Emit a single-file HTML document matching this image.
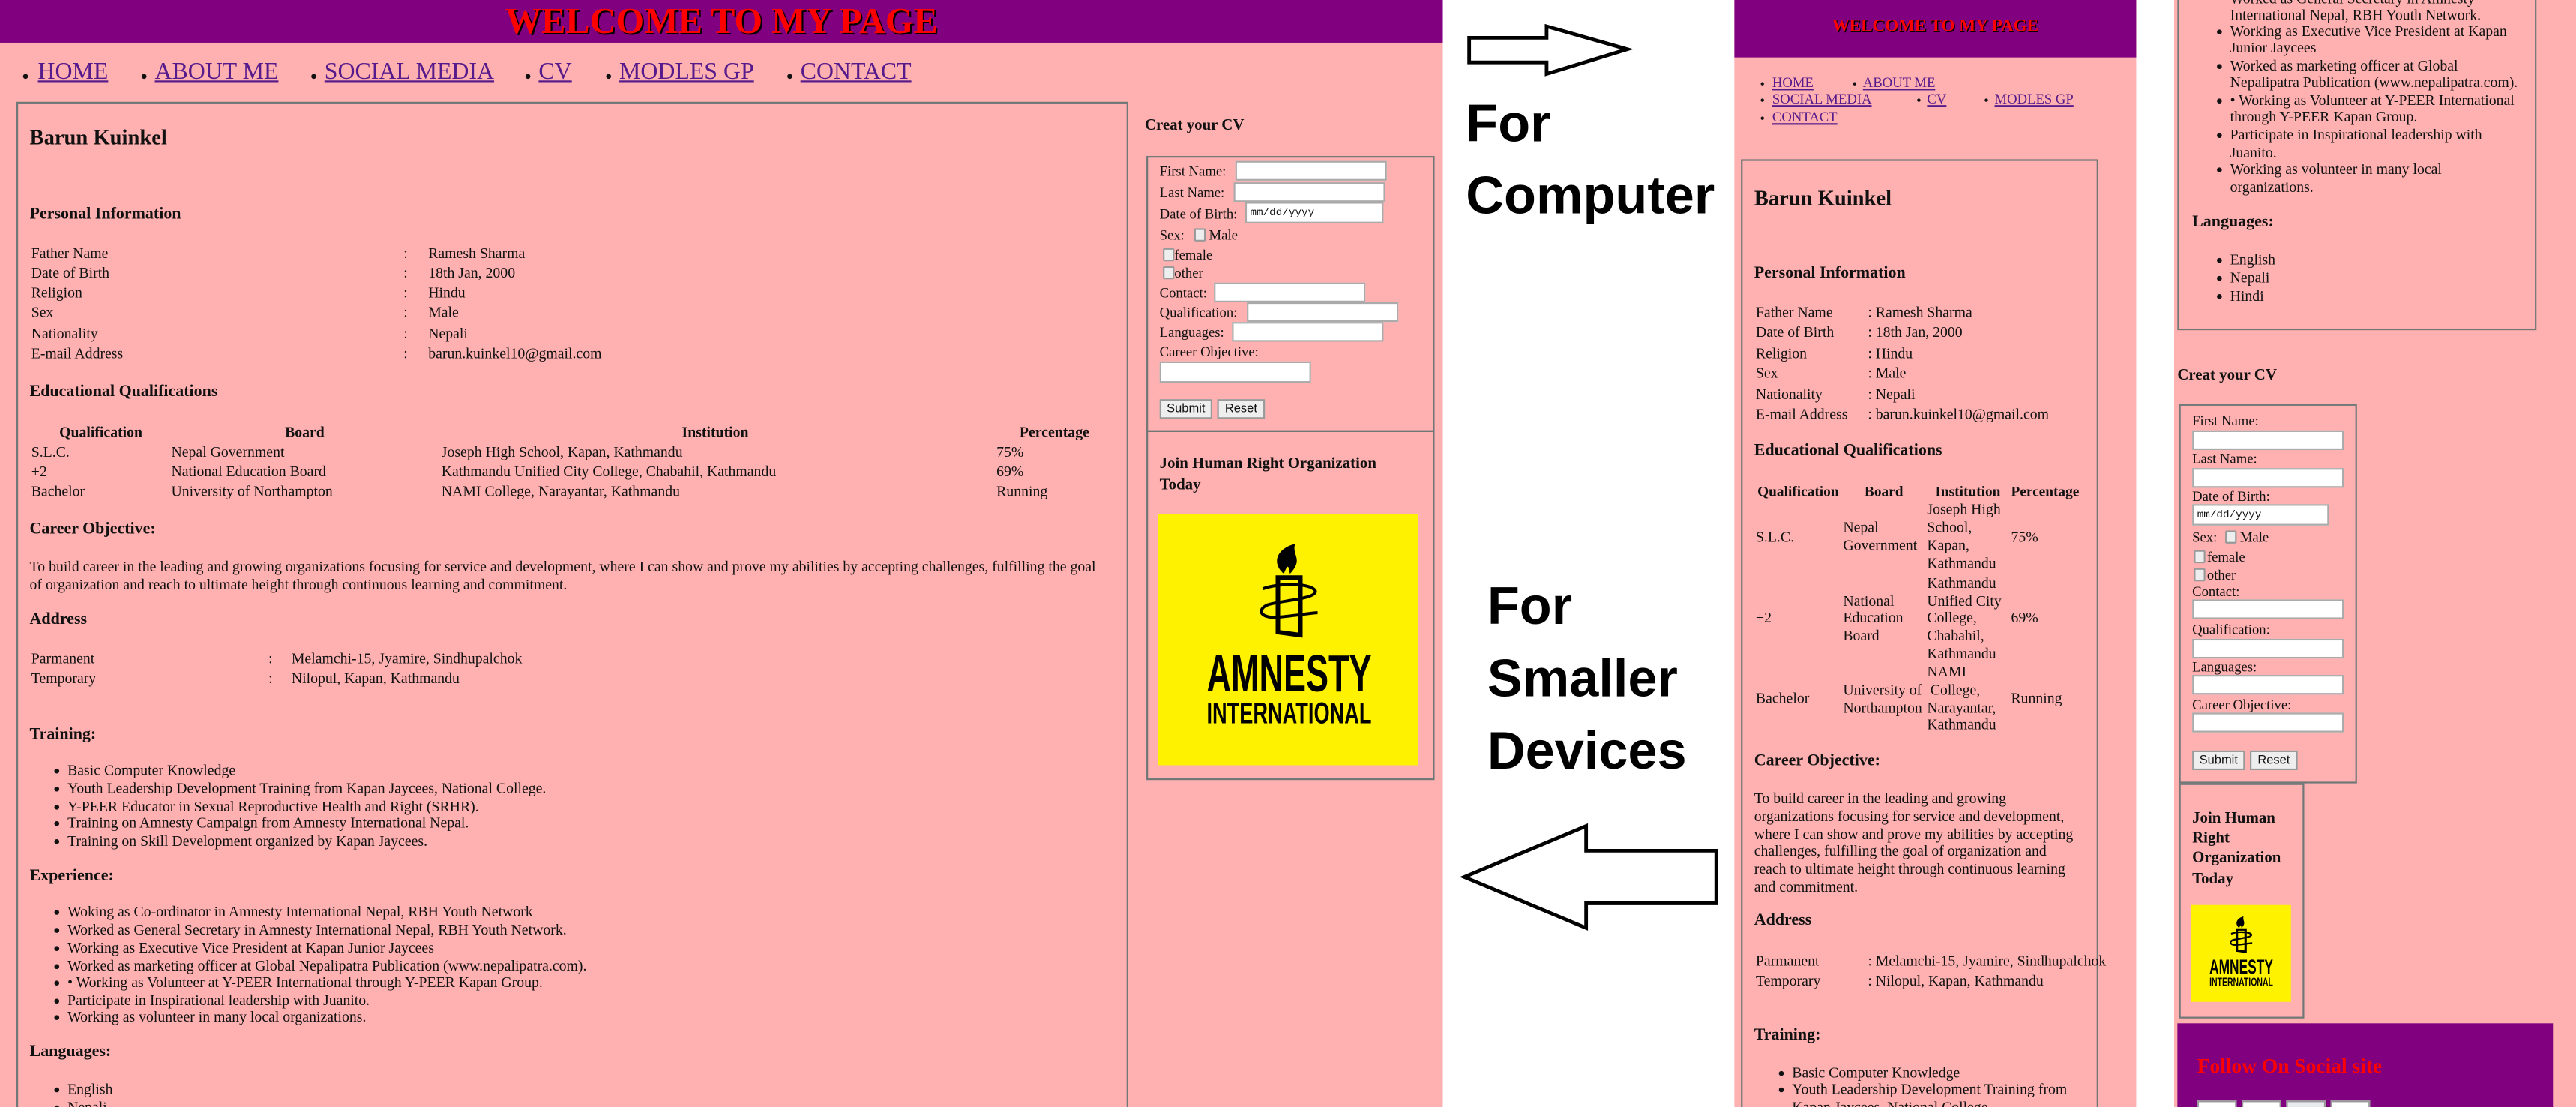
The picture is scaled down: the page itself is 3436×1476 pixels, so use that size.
<!DOCTYPE html>
<html><head><meta charset="utf-8">
<style>
html,body{margin:0;padding:0;background:#fff;width:3436px;height:1476px;overflow:hidden}
#s{position:absolute;left:0;top:0;width:1564px;height:674px;transform:scale(2.19693,2.18991);transform-origin:0 0;font-family:"Liberation Serif",serif;color:#111;font-size:9px;overflow:hidden}
.t{position:absolute;line-height:12px;white-space:nowrap}
.b{font-weight:bold;font-size:10px}
.pk{position:absolute;background:#FFB0B0}
.pu{position:absolute;background:#800080}
.bx{position:absolute;border:1px solid #6f7777;box-sizing:border-box}
.in{position:absolute;background:#fff;border:1px solid #aaa;box-sizing:border-box;height:12px}
.cb{position:absolute;width:5px;height:6px;border:0.6px solid #999;background:#eee;border-radius:1px}
.btn{position:absolute;height:12px;background:#eee;border:1px solid #999;box-sizing:border-box;font-family:"Liberation Sans",sans-serif;font-size:7.5px;line-height:10px;text-align:center}
a{color:#551A8B;text-decoration:underline}
.nav{font-size:14.5px;line-height:16px}
.dot{position:absolute;width:3px;height:3px;border-radius:50%;background:#111}
.bul::before{content:"";position:absolute;left:-8px;top:5px;width:3px;height:3px;border-radius:50%;background:#111}
.big{position:absolute;font-family:"Liberation Sans",sans-serif;font-weight:bold;font-size:32px;line-height:36px;color:#000;white-space:nowrap}
</style></head><body><div id="s">

<!-- Panel 1 -->
<div class="pk" style="left:0;top:0;width:876px;height:674px"></div>
<div class="pu" style="left:0;top:0;width:876px;height:26px"></div>
<div class="t" style="left:0;width:876px;top:1px;text-align:center;font-size:22px;line-height:24px;font-weight:bold;color:#f00;text-shadow:1px 1px 0 #000">WELCOME TO MY PAGE</div>
<div class="dot" style="left:14px;top:45px"></div><div class="t nav" style="left:23px;top:36px"><a>HOME</a></div>
<div class="dot" style="left:86px;top:45px"></div><div class="t nav" style="left:94px;top:36px"><a>ABOUT ME</a></div>
<div class="dot" style="left:189px;top:45px"></div><div class="t nav" style="left:197px;top:36px"><a>SOCIAL MEDIA</a></div>
<div class="dot" style="left:319px;top:45px"></div><div class="t nav" style="left:327px;top:36px"><a>CV</a></div>
<div class="dot" style="left:368px;top:45px"></div><div class="t nav" style="left:376px;top:36px"><a>MODLES GP</a></div>
<div class="dot" style="left:478px;top:45px"></div><div class="t nav" style="left:486px;top:36px"><a>CONTACT</a></div>

<div class="bx" style="left:10px;top:62px;width:675px;height:640px"></div>
<div class="t" style="left:18px;top:77px;font-size:13px;line-height:14px;font-weight:bold">Barun Kuinkel</div>
<div class="t b" style="left:18px;top:125px">Personal Information</div>
<div class="t" style="left:19px;top:148px">Father Name</div><div class="t" style="left:245px;top:148px">:</div><div class="t" style="left:260px;top:148px">Ramesh Sharma</div>
<div class="t" style="left:19px;top:160px">Date of Birth</div><div class="t" style="left:245px;top:160px">:</div><div class="t" style="left:260px;top:160px">18th Jan, 2000</div>
<div class="t" style="left:19px;top:172px">Religion</div><div class="t" style="left:245px;top:172px">:</div><div class="t" style="left:260px;top:172px">Hindu</div>
<div class="t" style="left:19px;top:184px">Sex</div><div class="t" style="left:245px;top:184px">:</div><div class="t" style="left:260px;top:184px">Male</div>
<div class="t" style="left:19px;top:197px">Nationality</div><div class="t" style="left:245px;top:197px">:</div><div class="t" style="left:260px;top:197px">Nepali</div>
<div class="t" style="left:19px;top:209px">E-mail Address</div><div class="t" style="left:245px;top:209px">:</div><div class="t" style="left:260px;top:209px">barun.kuinkel10@gmail.com</div>
<div class="t b" style="left:18px;top:233px">Educational Qualifications</div>
<div class="t" style="left:36px;top:257px;font-weight:bold">Qualification</div>
<div class="t" style="left:173px;top:257px;font-weight:bold">Board</div>
<div class="t" style="left:414px;top:257px;font-weight:bold">Institution</div>
<div class="t" style="left:619px;top:257px;font-weight:bold">Percentage</div>
<div class="t" style="left:19px;top:269px">S.L.C.</div><div class="t" style="left:104px;top:269px">Nepal Government</div><div class="t" style="left:268px;top:269px">Joseph High School, Kapan, Kathmandu</div><div class="t" style="left:605px;top:269px">75%</div>
<div class="t" style="left:19px;top:281px">+2</div><div class="t" style="left:104px;top:281px">National Education Board</div><div class="t" style="left:268px;top:281px">Kathmandu Unified City College, Chabahil, Kathmandu</div><div class="t" style="left:605px;top:281px">69%</div>
<div class="t" style="left:19px;top:293px">Bachelor</div><div class="t" style="left:104px;top:293px">University of Northampton</div><div class="t" style="left:268px;top:293px">NAMI College, Narayantar, Kathmandu</div><div class="t" style="left:605px;top:293px">Running</div>
<div class="t b" style="left:18px;top:317px">Career Objective:</div>
<div class="t" style="left:18px;top:339px">To build career in the leading and growing organizations focusing for service and development, where I can show and prove my abilities by accepting challenges, fulfilling the goal</div>
<div class="t" style="left:18px;top:350px">of organization and reach to ultimate height through continuous learning and commitment.</div>
<div class="t b" style="left:18px;top:372px">Address</div>
<div class="t" style="left:19px;top:395px">Parmanent</div><div class="t" style="left:163px;top:395px">:</div><div class="t" style="left:177px;top:395px">Melamchi-15, Jyamire, Sindhupalchok</div>
<div class="t" style="left:19px;top:407px">Temporary</div><div class="t" style="left:163px;top:407px">:</div><div class="t" style="left:177px;top:407px">Nilopul, Kapan, Kathmandu</div>
<div class="t b" style="left:18px;top:442px">Training:</div>
<div class="t bul" style="left:41px;top:463px">Basic Computer Knowledge</div>
<div class="t bul" style="left:41px;top:474px">Youth Leadership Development Training from Kapan Jaycees, National College.</div>
<div class="t bul" style="left:41px;top:485px">Y-PEER Educator in Sexual Reproductive Health and Right (SRHR).</div>
<div class="t bul" style="left:41px;top:495px">Training on Amnesty Campaign from Amnesty International Nepal.</div>
<div class="t bul" style="left:41px;top:506px">Training on Skill Development organized by Kapan Jaycees.</div>
<div class="t b" style="left:18px;top:528px">Experience:</div>
<div class="t bul" style="left:41px;top:549px">Woking as Co-ordinator in Amnesty International Nepal, RBH Youth Network</div>
<div class="t bul" style="left:41px;top:560px">Worked as General Secretary in Amnesty International Nepal, RBH Youth Network.</div>
<div class="t bul" style="left:41px;top:571px">Working as Executive Vice President at Kapan Junior Jaycees</div>
<div class="t bul" style="left:41px;top:582px">Worked as marketing officer at Global Nepalipatra Publication (www.nepalipatra.com).</div>
<div class="t bul" style="left:41px;top:592px">• Working as Volunteer at Y-PEER International through Y-PEER Kapan Group.</div>
<div class="t bul" style="left:41px;top:603px">Participate in Inspirational leadership with Juanito.</div>
<div class="t bul" style="left:41px;top:613px">Working as volunteer in many local organizations.</div>
<div class="t b" style="left:18px;top:635px">Languages:</div>
<div class="t bul" style="left:41px;top:657px">English</div>
<div class="t bul" style="left:41px;top:668px">Nepali</div>

<!-- sidebar 1 -->
<div class="t b" style="left:695px;top:71px;font-size:9.5px">Creat your CV</div>
<div class="bx" style="left:696px;top:95px;width:175px;height:168px;border-width:1.2px"></div>
<div class="t" style="left:704px;top:98px;font-size:8.5px">First Name:</div><div class="in" style="left:750px;top:98px;width:92px"></div>
<div class="t" style="left:704px;top:111px;font-size:8.5px">Last Name:</div><div class="in" style="left:749px;top:111px;width:92px"></div>
<div class="t" style="left:704px;top:124px;font-size:8.5px">Date of Birth:</div><div class="in" style="left:756px;top:123px;width:84px;height:13px;font-family:'Liberation Mono',monospace;font-size:6.5px;line-height:11px;padding-left:2px">mm/dd/yyyy</div>
<div class="t" style="left:704px;top:137px;font-size:8.5px">Sex:</div><div class="cb" style="left:725px;top:139px"></div><div class="t" style="left:734px;top:137px;font-size:8.5px">Male</div>
<div class="cb" style="left:706px;top:151px"></div><div class="t" style="left:713px;top:149px;font-size:8.5px">female</div>
<div class="cb" style="left:706px;top:162px"></div><div class="t" style="left:713px;top:160px;font-size:8.5px">other</div>
<div class="t" style="left:704px;top:172px;font-size:8.5px">Contact:</div><div class="in" style="left:737px;top:172px;width:92px"></div>
<div class="t" style="left:704px;top:184px;font-size:8.5px">Qualification:</div><div class="in" style="left:757px;top:184px;width:92px"></div>
<div class="t" style="left:704px;top:196px;font-size:8.5px">Languages:</div><div class="in" style="left:748px;top:196px;width:92px"></div>
<div class="t" style="left:704px;top:208px;font-size:8.5px">Career Objective:</div><div class="in" style="left:704px;top:220px;width:92px;height:13px"></div>
<div class="btn" style="left:704px;top:243px;width:32px">Submit</div><div class="btn" style="left:739px;top:243px;width:29px">Reset</div>
<div class="bx" style="left:696px;top:262px;width:175px;height:213px;border-width:1.2px"></div>
<div class="t b" style="left:704px;top:277px;font-size:9.5px">Join Human Right Organization</div>
<div class="t b" style="left:704px;top:290px;font-size:9.5px">Today</div>
<svg style="position:absolute;left:703px;top:313px" width="158" height="153" viewBox="0 0 347 336">
<rect width="347" height="336" fill="#FFF200"/>
<path d="M160 85 L190 85 L190 162 L160 158 Z" fill="none" stroke="#000" stroke-width="6"/>
<path d="M168 80 C150 65 160 45 183 40 C178 55 195 60 176 80 C174 65 172 70 168 80 Z" fill="#000"/>
<path d="M140 100 C160 92 205 92 210 103 C212 114 160 116 145 122 C130 130 140 140 160 138 C185 136 205 132 213 132" fill="none" stroke="#000" stroke-width="4"/>
<text x="175" y="237" text-anchor="middle" font-family="Liberation Sans,sans-serif" font-weight="bold" font-size="70" textLength="220" lengthAdjust="spacingAndGlyphs">AMNESTY</text>
<text x="175" y="280" text-anchor="middle" font-family="Liberation Sans,sans-serif" font-weight="bold" font-size="40" textLength="220" lengthAdjust="spacingAndGlyphs">INTERNATIONAL</text>
</svg>

<!-- white middle -->
<svg style="position:absolute;left:880px;top:10px" width="120" height="40"><polygon points="12,13 59,13 59,6 108,20 59,35 59,28 12,28" fill="#fff" stroke="#000" stroke-width="2.2"/></svg>
<div class="big" style="left:890px;top:57px">For</div>
<div class="big" style="left:890px;top:101px">Computer</div>
<div class="big" style="left:903px;top:351px">For</div>
<div class="big" style="left:903px;top:395px">Smaller</div>
<div class="big" style="left:903px;top:439px">Devices</div>
<svg style="position:absolute;left:880px;top:495px" width="170" height="80"><polygon points="9,39 83,8 83,23 162,23 162,55 83,55 83,70" fill="#fff" stroke="#000" stroke-width="2.2"/></svg>

<!-- Panel 2 -->
<div class="pk" style="left:1053px;top:0;width:244px;height:674px"></div>
<div class="pu" style="left:1053px;top:0;width:244px;height:35px"></div>
<div class="t" style="left:1053px;width:244px;top:11px;text-align:center;font-size:10.5px;font-weight:bold;color:#f00;text-shadow:0.6px 0.6px 0 #000">WELCOME TO MY PAGE</div>
<div class="dot" style="left:1069px;top:50px;width:2px;height:2px"></div><div class="t" style="left:1076px;top:44px;font-size:8.5px"><a>HOME</a></div>
<div class="dot" style="left:1125px;top:50px;width:2px;height:2px"></div><div class="t" style="left:1131px;top:44px;font-size:8.5px"><a>ABOUT ME</a></div>
<div class="dot" style="left:1069px;top:60px;width:2px;height:2px"></div><div class="t" style="left:1076px;top:54px;font-size:8.5px"><a>SOCIAL MEDIA</a></div>
<div class="dot" style="left:1164px;top:60px;width:2px;height:2px"></div><div class="t" style="left:1170px;top:54px;font-size:8.5px"><a>CV</a></div>
<div class="dot" style="left:1205px;top:60px;width:2px;height:2px"></div><div class="t" style="left:1211px;top:54px;font-size:8.5px"><a>MODLES GP</a></div>
<div class="dot" style="left:1069px;top:71px;width:2px;height:2px"></div><div class="t" style="left:1076px;top:65px;font-size:8.5px"><a>CONTACT</a></div>
<div class="bx" style="left:1057px;top:97px;width:217px;height:600px"></div>
<div class="t" style="left:1065px;top:114px;font-size:13px;line-height:14px;font-weight:bold">Barun Kuinkel</div>
<div class="t b" style="left:1065px;top:161px">Personal Information</div>
<div class="t" style="left:1066px;top:184px">Father Name</div><div class="t" style="left:1134px;top:184px">: Ramesh Sharma</div>
<div class="t" style="left:1066px;top:196px">Date of Birth</div><div class="t" style="left:1134px;top:196px">: 18th Jan, 2000</div>
<div class="t" style="left:1066px;top:209px">Religion</div><div class="t" style="left:1134px;top:209px">: Hindu</div>
<div class="t" style="left:1066px;top:221px">Sex</div><div class="t" style="left:1134px;top:221px">: Male</div>
<div class="t" style="left:1066px;top:234px">Nationality</div><div class="t" style="left:1134px;top:234px">: Nepali</div>
<div class="t" style="left:1066px;top:246px">E-mail Address</div><div class="t" style="left:1134px;top:246px">: barun.kuinkel10@gmail.com</div>
<div class="t b" style="left:1065px;top:269px">Educational Qualifications</div>
<div class="t" style="left:1067px;top:293px;font-weight:bold;font-size:8.8px">Qualification</div>
<div class="t" style="left:1132px;top:293px;font-weight:bold;font-size:8.8px">Board</div>
<div class="t" style="left:1175px;top:293px;font-weight:bold;font-size:8.8px">Institution</div>
<div class="t" style="left:1221px;top:293px;font-weight:bold;font-size:8.8px">Percentage</div>
<div class="t" style="left:1066px;top:321px">S.L.C.</div>
<div class="t" style="left:1119px;top:315px">Nepal</div><div class="t" style="left:1119px;top:326px">Government</div>
<div class="t" style="left:1170px;top:304px">Joseph High</div><div class="t" style="left:1170px;top:315px">School,</div><div class="t" style="left:1170px;top:326px">Kapan,</div><div class="t" style="left:1170px;top:337px">Kathmandu</div>
<div class="t" style="left:1221px;top:321px">75%</div>
<div class="t" style="left:1066px;top:370px">+2</div>
<div class="t" style="left:1119px;top:360px">National</div><div class="t" style="left:1119px;top:370px">Education</div><div class="t" style="left:1119px;top:381px">Board</div>
<div class="t" style="left:1170px;top:349px">Kathmandu</div><div class="t" style="left:1170px;top:360px">Unified City</div><div class="t" style="left:1170px;top:370px">College,</div><div class="t" style="left:1170px;top:381px">Chabahil,</div><div class="t" style="left:1170px;top:392px">Kathmandu</div>
<div class="t" style="left:1221px;top:370px">69%</div>
<div class="t" style="left:1066px;top:419px">Bachelor</div>
<div class="t" style="left:1119px;top:414px">University of</div><div class="t" style="left:1119px;top:425px">Northampton</div>
<div class="t" style="left:1170px;top:403px">NAMI</div><div class="t" style="left:1172px;top:414px">College,</div><div class="t" style="left:1170px;top:425px">Narayantar,</div><div class="t" style="left:1170px;top:435px">Kathmandu</div>
<div class="t" style="left:1221px;top:419px">Running</div>
<div class="t b" style="left:1065px;top:458px">Career Objective:</div>
<div class="t" style="left:1065px;top:480px">To build career in the leading and growing</div>
<div class="t" style="left:1065px;top:491px">organizations focusing for service and development,</div>
<div class="t" style="left:1065px;top:502px">where I can show and prove my abilities by accepting</div>
<div class="t" style="left:1065px;top:512px">challenges, fulfilling the goal of organization and</div>
<div class="t" style="left:1065px;top:523px">reach to ultimate height through continuous learning</div>
<div class="t" style="left:1065px;top:534px">and commitment.</div>
<div class="t b" style="left:1065px;top:555px">Address</div>
<div class="t" style="left:1066px;top:579px">Parmanent</div><div class="t" style="left:1134px;top:579px">: Melamchi-15, Jyamire, Sindhupalchok</div>
<div class="t" style="left:1066px;top:591px">Temporary</div><div class="t" style="left:1134px;top:591px">: Nilopul, Kapan, Kathmandu</div>
<div class="t b" style="left:1065px;top:625px">Training:</div>
<div class="t bul" style="left:1088px;top:647px">Basic Computer Knowledge</div>
<div class="t bul" style="left:1088px;top:657px">Youth Leadership Development Training from</div>
<div class="t" style="left:1088px;top:668px">Kapan Jaycees, National College.</div>

<!-- Panel 3 -->
<div class="pk" style="left:1320px;top:0;width:244px;height:674px"></div>
<div class="bx" style="left:1322px;top:-20px;width:218px;height:221px"></div>
<div class="t" style="left:1354px;top:-7px">Worked as General Secretary in Amnesty</div>
<div class="t" style="left:1354px;top:3px">International Nepal, RBH Youth Network.</div>
<div class="t bul" style="left:1354px;top:13px">Working as Executive Vice President at Kapan</div>
<div class="t" style="left:1354px;top:23px">Junior Jaycees</div>
<div class="t bul" style="left:1354px;top:34px">Worked as marketing officer at Global</div>
<div class="t" style="left:1354px;top:44px">Nepalipatra Publication (www.nepalipatra.com).</div>
<div class="t bul" style="left:1354px;top:55px">• Working as Volunteer at Y-PEER International</div>
<div class="t" style="left:1354px;top:65px">through Y-PEER Kapan Group.</div>
<div class="t bul" style="left:1354px;top:76px">Participate in Inspirational leadership with</div>
<div class="t" style="left:1354px;top:87px">Juanito.</div>
<div class="t bul" style="left:1354px;top:97px">Working as volunteer in many local</div>
<div class="t" style="left:1354px;top:108px">organizations.</div>
<div class="t b" style="left:1331px;top:130px">Languages:</div>
<div class="t bul" style="left:1354px;top:152px">English</div>
<div class="t bul" style="left:1354px;top:163px">Nepali</div>
<div class="t bul" style="left:1354px;top:174px">Hindi</div>
<div class="t b" style="left:1322px;top:223px;font-size:9.5px">Creat your CV</div>
<div class="bx" style="left:1323px;top:246px;width:108px;height:231px;border-width:1.2px"></div>
<div class="t" style="left:1331px;top:250px;font-size:8.5px">First Name:</div><div class="in" style="left:1331px;top:262px;width:92px"></div>
<div class="t" style="left:1331px;top:273px;font-size:8.5px">Last Name:</div><div class="in" style="left:1331px;top:285px;width:92px"></div>
<div class="t" style="left:1331px;top:296px;font-size:8.5px">Date of Birth:</div><div class="in" style="left:1331px;top:307px;width:83px;height:13px;font-family:'Liberation Mono',monospace;font-size:6.5px;line-height:11px;padding-left:2px">mm/dd/yyyy</div>
<div class="t" style="left:1331px;top:321px;font-size:8.5px">Sex:</div><div class="cb" style="left:1351px;top:323px"></div><div class="t" style="left:1360px;top:321px;font-size:8.5px">Male</div>
<div class="cb" style="left:1332px;top:335px"></div><div class="t" style="left:1340px;top:333px;font-size:8.5px">female</div>
<div class="cb" style="left:1332px;top:346px"></div><div class="t" style="left:1340px;top:344px;font-size:8.5px">other</div>
<div class="t" style="left:1331px;top:354px;font-size:8.5px">Contact:</div><div class="in" style="left:1331px;top:365px;width:92px"></div>
<div class="t" style="left:1331px;top:377px;font-size:8.5px">Qualification:</div><div class="in" style="left:1331px;top:389px;width:92px"></div>
<div class="t" style="left:1331px;top:400px;font-size:8.5px">Languages:</div><div class="in" style="left:1331px;top:411px;width:92px"></div>
<div class="t" style="left:1331px;top:423px;font-size:8.5px">Career Objective:</div><div class="in" style="left:1331px;top:434px;width:92px"></div>
<div class="btn" style="left:1331px;top:457px;width:32px">Submit</div><div class="btn" style="left:1366px;top:457px;width:29px">Reset</div>
<div class="bx" style="left:1323px;top:477px;width:76px;height:143px;border-width:1.2px"></div>
<div class="t b" style="left:1331px;top:493px;font-size:9.5px">Join Human</div>
<div class="t b" style="left:1331px;top:505px;font-size:9.5px">Right</div>
<div class="t b" style="left:1331px;top:517px;font-size:9.5px">Organization</div>
<div class="t b" style="left:1331px;top:530px;font-size:9.5px">Today</div>
<svg style="position:absolute;left:1330px;top:551px" width="61" height="59" viewBox="0 0 347 336">
<rect width="347" height="336" fill="#FFF200"/>
<path d="M160 85 L190 85 L190 162 L160 158 Z" fill="none" stroke="#000" stroke-width="8"/>
<path d="M168 80 C150 65 160 45 183 40 C178 55 195 60 176 80 C174 65 172 70 168 80 Z" fill="#000"/>
<path d="M140 100 C160 92 205 92 210 103 C212 114 160 116 145 122 C130 130 140 140 160 138 C185 136 205 132 213 132" fill="none" stroke="#000" stroke-width="6"/>
<text x="175" y="237" text-anchor="middle" font-family="Liberation Sans,sans-serif" font-weight="bold" font-size="70" textLength="220" lengthAdjust="spacingAndGlyphs">AMNESTY</text>
<text x="175" y="280" text-anchor="middle" font-family="Liberation Sans,sans-serif" font-weight="bold" font-size="40" textLength="220" lengthAdjust="spacingAndGlyphs">INTERNATIONAL</text>
</svg>
<div class="pu" style="left:1322px;top:623px;width:228px;height:60px"></div>
<div class="t" style="left:1334px;top:642px;font-size:12.5px;line-height:14px;font-weight:bold;color:#f00">Follow On Social site</div>
<div style="position:absolute;left:1334px;top:670px;width:22px;height:10px;background:#fff;border:0.6px solid #999"></div>
<div style="position:absolute;left:1361px;top:670px;width:22px;height:10px;background:#fff;border:0.6px solid #999"></div>
<div style="position:absolute;left:1388px;top:670px;width:22px;height:10px;background:#e8eaee;border:0.6px solid #999"></div>
<div style="position:absolute;left:1415px;top:670px;width:22px;height:10px;background:#fff;border:0.6px solid #999"></div>

</div></body></html>
